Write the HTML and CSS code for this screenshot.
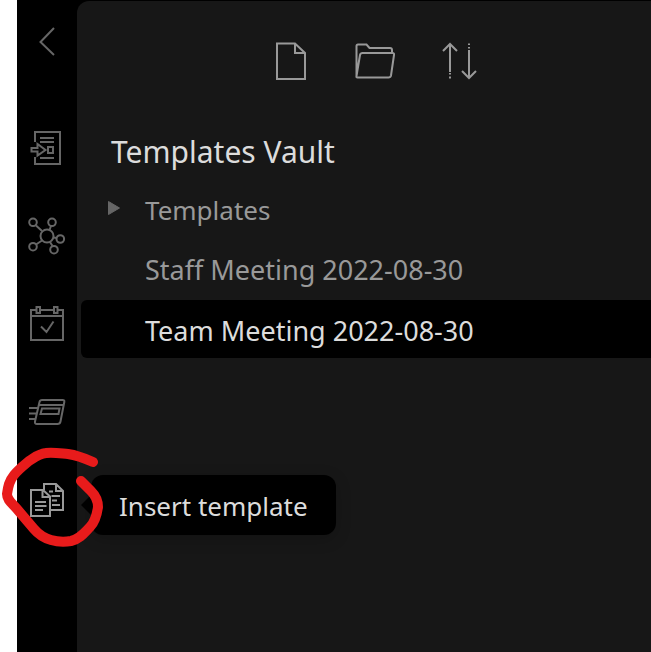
FILE: index.html
```html
<!DOCTYPE html>
<html lang="en">
<head>
<meta charset="utf-8">
<title>Templates Vault</title>
<link rel="stylesheet" href="styles.css">
</head>
<body>
<div class="app">
  <nav class="rail" aria-label="Ribbon">
    <button class="rail-button collapse" aria-label="Collapse"><svg class="icon" viewBox="0 0 44 44"><path d="M29 8 15.500 22 29 35"/></svg></button>
    <button class="rail-button" aria-label="Quick switcher"><svg class="icon" viewBox="0 0 44 44"><path d="M10 16V6H35V38H10V31M15 12H29M15 16H29M15 32H29M23 21h5v6h-5zM6.500 22H12.500V18L20.500 24 12.500 29.500V25.500H6.500z"/></svg></button>
    <button class="rail-button" aria-label="Graph view"><svg class="icon" viewBox="0 0 44 44"><circle cx="22" cy="22" r="6.500"/><circle cx="8" cy="8.300" r="3.800"/><circle cx="27" cy="8.300" r="3.800"/><circle cx="35.300" cy="25" r="3.800"/><circle cx="29" cy="35.700" r="3.800"/><circle cx="8" cy="32.700" r="3.800"/><path d="M11 11.500 17 17M26 12 24.500 16M28.500 23.500 31.500 24M25 28 27.500 32M17 26.500 11 30.500"/></svg></button>
    <button class="rail-button" aria-label="Daily note"><svg class="icon" viewBox="0 0 44 44"><path d="M11.500 8H6V38H38V8H32.500M15 8H29M6 14H38M11.500 5H15V11H11.500zM29 5H32.500V11H29zM16 24.500 21.500 30 28.500 19.500"/></svg></button>
    <button class="rail-button" aria-label="Command palette"><svg class="icon" viewBox="0 0 44 44"><path d="M17 10H37.500Q39.800 10 39.300 12L35.500 31.500Q35 34 32.500 34H12Q9.500 34 10 31.500L14.500 12Q15 10 17 10zM14 15H38.500M17 18.500H34.500L33.500 24H15.500zM4 18H12.500M4 23.500H11M4 29H10"/></svg></button>
    <div class="rail-item">
      <button class="rail-button active" aria-describedby="tip"><svg class="icon" viewBox="0 0 44 44"><path d="M6 12H18L25 18.500V38H6zM17.500 12V19H25M10 24H21M10 28H21.500M10 32H18M19 12V6H31L38 13V32H26M31 6V13H38M24 13.500H28M26.500 18H35M27 22.500H32M27 27H35"/></svg></button>
      <div class="tooltip" id="tip" role="tooltip">Insert template</div>
      <svg class="marker" viewBox="0 0 106 110" aria-hidden="true"><path d="M93 17C84 13 75 10 68 9C58 8 52 7 46 8C38 9 34 13 29 16C23 21 18 25 14 30C9 36 8 42 7 49C7 55 12 58 17 64L34 84C39 90 44 93 51 95C58 97 65 97 71 96C80 94 85 87 90 82C95 77 97 69 98 62C98 54 94 49 91 46L81 36"/></svg>
    </div>
  </nav>
  <main class="panel">
    <div class="toolbar">
      <button aria-label="New note"><svg class="icon" viewBox="0 0 44 44"><path d="M8 4.500H26L36 14V40H8zM26 4.500V14H36"/></svg></button>
      <button aria-label="New folder"><svg class="icon" viewBox="0 0 44 44"><path d="M3.500 37V7Q3.500 5.500 5 5.500H13.500L16.500 9H37Q39 9 39 11V13.500M3.500 37 7 16Q7.500 14 9.500 14H39.500Q41.500 14 41 16L38 36.500Q37.500 38.500 35.500 38.500H4.500Q3 38.500 3.500 37z"/></svg></button>
      <button aria-label="Change sort order"><svg class="icon" viewBox="0 0 44 44"><path d="M13 33V5M6 12 13 5 20 12M13 34V35.500M13 37.500V39.500M32 11V39M25 32 32 39 39 32M32 4.500V6M32 8V9.500"/></svg></button>
    </div>
    <h1 class="vault">Templates Vault</h1>
    <ul class="tree">
      <li><a class="row folder" href="#"><svg class="caret" viewBox="0 0 14 16"><path d="M1.500 1.500V14.500L12.500 8z"/></svg>Templates</a></li>
      <li><a class="row" href="#">Staff Meeting 2022-08-30</a></li>
      <li><a class="row selected" href="#" aria-current="page">Team Meeting 2022-08-30</a></li>
    </ul>
  </main>
</div>
</body>
</html>
```
FILE: styles.css
```css
* { box-sizing: border-box; }
body {
  margin: 0;
  padding-left: 17px;
  background: #fff;
  font-family: "Segoe UI", "Noto Sans", sans-serif;
  font-size: 27px;
  color: #999;
}
button { padding: 0; border: 0; background: none; color: inherit; }
.app { display: flex; min-height: 100vh; background: #000; }
.icon {
  display: block;
  width: 44px;
  height: 44px;
  fill: none;
  stroke: currentColor;
  stroke-width: 2;
}
.rail { flex: 0 0 60px; color: #666; }
.rail-button {
  display: flex;
  align-items: center;
  justify-content: center;
  width: 60px;
  height: 88px;
}
.collapse { height: 84px; margin-bottom: 20px; }
.active { color: #999; }
.rail-item { position: relative; }
.tooltip {
  position: absolute;
  z-index: 1;
  left: 74px;
  top: 19px;
  padding: 2px 28px 0;
  font-size: 26px;
  line-height: 58px;
  border-radius: 12px;
  background: #000;
  color: #dcdcdc;
  white-space: nowrap;
  box-shadow: 0 4px 16px rgba(0, 0, 0, 0.2);
}
.tooltip::before {
  content: "";
  position: absolute;
  left: -10px;
  top: 20px;
  border: 10px solid transparent;
  border-left: 0;
  border-right-color: #000;
}
.marker {
  position: absolute;
  z-index: 2;
  left: -17px;
  top: -11px;
  width: 106px;
  height: 110px;
  fill: none;
  stroke: #e81b1b;
  stroke-width: 10;
  stroke-linecap: round;
  stroke-linejoin: round;
  pointer-events: none;
}
.panel {
  flex: 1;
  min-width: 0;
  margin-top: 1px;
  background: #171717;
  border-top-left-radius: 12px;
}
.toolbar { display: flex; gap: 40px; padding: 38px 0 0 192px; }
.vault {
  margin: 0;
  padding: 41px 0 0 34px;
  font-size: 30px;
  font-weight: 400;
  line-height: 56px;
  color: #dcdcdc;
}
.tree { margin: 0; padding: 0 0 0 4px; list-style: none; }
.row {
  position: relative;
  display: block;
  padding-left: 64px;
  line-height: 60px;
  color: inherit;
  text-decoration: none;
}
.folder { font-size: 26px; }
.selected {
  padding-top: 4px;
  background: #000;
  color: #dcdcdc;
  line-height: 54px;
  border-radius: 6px 0 0 6px;
}
.caret {
  position: absolute;
  left: 26px;
  top: 20px;
  width: 14px;
  height: 16px;
  fill: #666;
  stroke: #666;
  stroke-linejoin: round;
}
```
